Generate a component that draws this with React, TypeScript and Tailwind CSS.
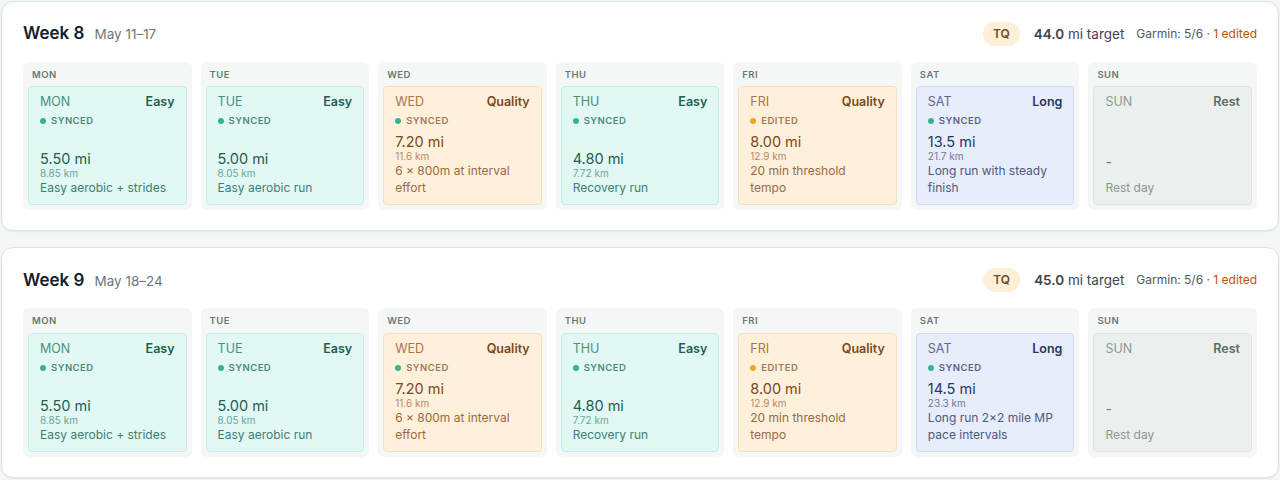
import React from "react";

type Kind = "easy" | "quality" | "long" | "rest";

interface Day {
  day: string;
  kind: Kind;
  status?: "synced" | "edited";
  mi?: string;
  km?: string;
  desc: string;
}

const styles: Record<Kind, { box: string; title: string; label: string; mi: string; km: string; desc: string; status: string }> = {
  easy: {
    box: "bg-[#e2f8f4] border-[#c4eee5]",
    title: "text-[#4a8f7f]",
    label: "text-[#1f5e50]",
    mi: "text-[#1f5e50]",
    km: "text-[#6aa597]",
    desc: "text-[#3f7f70]",
    status: "text-[#4a8a7b]",
  },
  quality: {
    box: "bg-[#fff0dc] border-[#f7dfbc]",
    title: "text-[#a8764a]",
    label: "text-[#7a4a1e]",
    mi: "text-[#7a4a1e]",
    km: "text-[#b58a62]",
    desc: "text-[#9a6a40]",
    status: "text-[#a07a58]",
  },
  long: {
    box: "bg-[#e8edfb] border-[#d0daf4]",
    title: "text-[#5a6a92]",
    label: "text-[#27375e]",
    mi: "text-[#27375e]",
    km: "text-[#6b7aa0]",
    desc: "text-[#4a5a82]",
    status: "text-[#55648a]",
  },
  rest: {
    box: "bg-[#ebf0ee] border-[#dde5e2]",
    title: "text-[#8c9894]",
    label: "text-[#5e6a66]",
    mi: "text-[#6e7a76]",
    km: "text-[#8c9894]",
    desc: "text-[#8c9894]",
    status: "",
  },
};

const kindLabel: Record<Kind, string> = { easy: "Easy", quality: "Quality", long: "Long", rest: "Rest" };

const weeks = [
  {
    title: "Week 8",
    range: "May 11–17",
    target: "44.0",
    days: [
      { day: "MON", kind: "easy", status: "synced", mi: "5.50 mi", km: "8.85 km", desc: "Easy aerobic + strides" },
      { day: "TUE", kind: "easy", status: "synced", mi: "5.00 mi", km: "8.05 km", desc: "Easy aerobic run" },
      { day: "WED", kind: "quality", status: "synced", mi: "7.20 mi", km: "11.6 km", desc: "6 x 800m at interval effort" },
      { day: "THU", kind: "easy", status: "synced", mi: "4.80 mi", km: "7.72 km", desc: "Recovery run" },
      { day: "FRI", kind: "quality", status: "edited", mi: "8.00 mi", km: "12.9 km", desc: "20 min threshold tempo" },
      { day: "SAT", kind: "long", status: "synced", mi: "13.5 mi", km: "21.7 km", desc: "Long run with steady finish" },
      { day: "SUN", kind: "rest", desc: "Rest day" },
    ] as Day[],
  },
  {
    title: "Week 9",
    range: "May 18–24",
    target: "45.0",
    days: [
      { day: "MON", kind: "easy", status: "synced", mi: "5.50 mi", km: "8.85 km", desc: "Easy aerobic + strides" },
      { day: "TUE", kind: "easy", status: "synced", mi: "5.00 mi", km: "8.05 km", desc: "Easy aerobic run" },
      { day: "WED", kind: "quality", status: "synced", mi: "7.20 mi", km: "11.6 km", desc: "6 x 800m at interval effort" },
      { day: "THU", kind: "easy", status: "synced", mi: "4.80 mi", km: "7.72 km", desc: "Recovery run" },
      { day: "FRI", kind: "quality", status: "edited", mi: "8.00 mi", km: "12.9 km", desc: "20 min threshold tempo" },
      { day: "SAT", kind: "long", status: "synced", mi: "14.5 mi", km: "23.3 km", desc: "Long run 2x2 mile MP pace intervals" },
      { day: "SUN", kind: "rest", desc: "Rest day" },
    ] as Day[],
  },
];

const DayCell = ({ d }: { d: Day }) => {
  const s = styles[d.kind];
  return (
    <div className="flex flex-col rounded-md bg-[#f5f7f6] p-[5px] pt-[6px]">
      <div className="mb-[4px] pl-[4px] text-[9.5px] font-semibold tracking-wider text-[#6b7775]">{d.day}</div>
      <div className={`flex h-[119px] flex-col rounded-[4px] border px-[11px] pt-[7px] pb-[8px] ${s.box}`}>
        <div className="flex items-center justify-between text-[12.5px] leading-[16px]">
          <span className={s.title}>{d.day}</span>
          <span className={`font-semibold ${s.label}`}>{kindLabel[d.kind]}</span>
        </div>
        {d.status && (
          <div className={`mt-[4px] flex items-center gap-[5px] text-[9.5px] font-semibold tracking-wider ${s.status}`}>
            <span className={`h-[6px] w-[6px] rounded-full ${d.status === "edited" ? "bg-[#f5a524]" : "bg-[#3bb28e]"}`} />
            {d.status === "edited" ? "EDITED" : "SYNCED"}
          </div>
        )}
        <div className="mt-auto">
          {d.mi ? (
            <>
              <div className={`text-[14.5px] leading-[18px] ${s.mi}`}>{d.mi}</div>
              <div className={`text-[10px] leading-[11px] ${s.km}`}>{d.km}</div>
            </>
          ) : (
            <div className={`mb-[8px] text-[14px] leading-[18px] ${s.mi}`}>-</div>
          )}
          <div className={`text-[12px] leading-[17px] ${s.desc}`}>{d.desc}</div>
        </div>
      </div>
    </div>
  );
};

export default function App() {
  return (
    <div
      className="flex min-h-[480px] flex-col gap-[16px] bg-[#f4f7f6] px-[1px] pt-[1px] [font-feature-settings:'calt'_0]"
      style={{ fontFamily: "Inter, 'Noto Sans', sans-serif" }}
    >
      {weeks.map((w) => (
        <div key={w.title} className="rounded-[12px] border border-[#d8e4e0] bg-white px-[21px] pt-[20px] pb-[20px] shadow-[0_1px_2px_rgba(0,0,0,0.06)]">
          <div className="mb-[16px] flex h-[24px] items-center justify-between">
            <div className="flex items-baseline gap-[10px]">
              <span className="text-[17px] font-semibold text-[#13202a]">{w.title}</span>
              <span className="text-[13.5px] text-[#6b7780]">{w.range}</span>
            </div>
            <div className="flex items-center">
              <span className="rounded-full bg-[#feefd9] px-[10px] py-[3px] text-[12px] font-semibold text-[#7a4a1e]">TQ</span>
              <span className="ml-[14px] text-[13.5px] text-[#3b4650]">
                <span className="font-semibold">{w.target}</span> mi target
              </span>
              <span className="ml-[12px] text-[12px] text-[#4d5963]">
                Garmin: 5/6 · <span className="text-[#c0500f]">1 edited</span>
              </span>
            </div>
          </div>
          <div className="grid grid-cols-7 gap-[9px]">
            {w.days.map((d) => (
              <DayCell key={d.day} d={d} />
            ))}
          </div>
        </div>
      ))}
    </div>
  );
}
